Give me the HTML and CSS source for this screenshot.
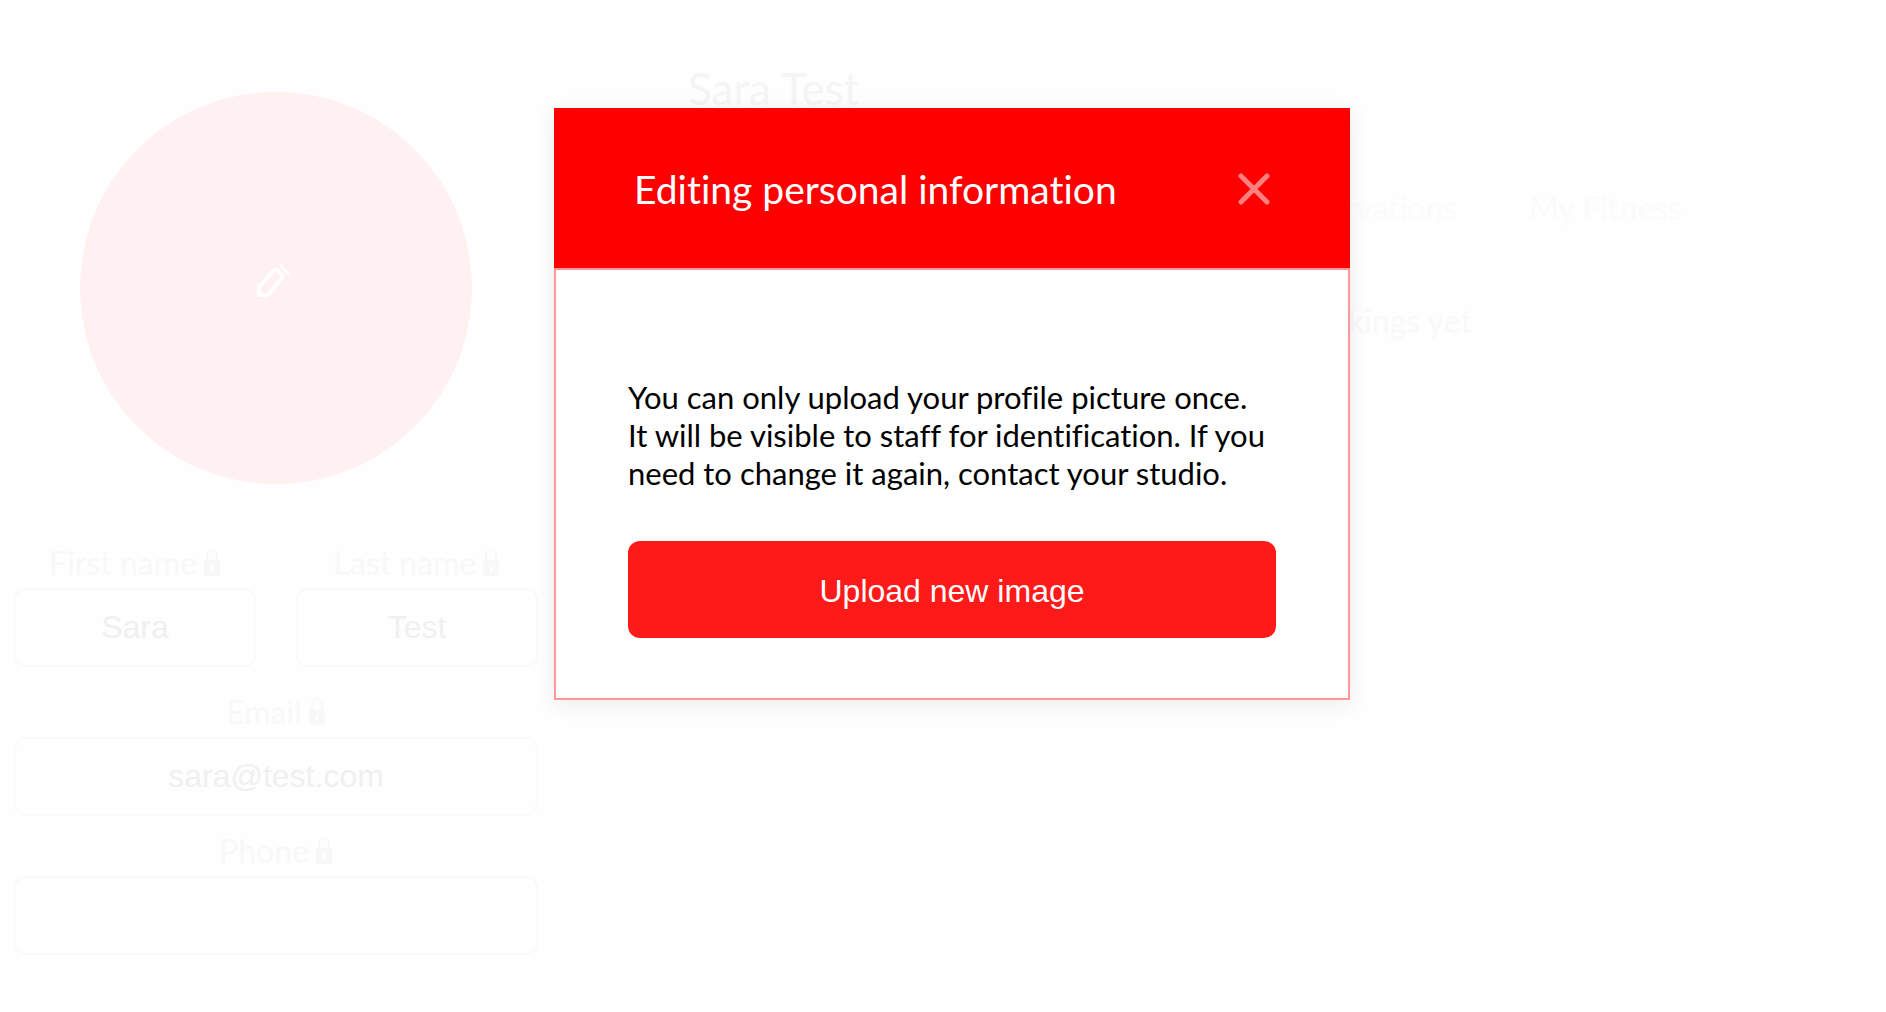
FILE: index.html
```html
<!DOCTYPE html>
<html lang="en">
<head>
  <meta charset="UTF-8">
  <title>Profile</title>
  <link rel="stylesheet" href="styles.css">
</head>
<body>

<svg class="sprite">
  <symbol id="lock" viewBox="0 0 18 28">
    <path d="M4 13V7a5 5 0 0 1 10 0v6" fill="none" stroke="currentColor" stroke-width="2"/>
    <path d="M1 12h16v14a2 2 0 0 1-2 2H3a2 2 0 0 1-2-2z" fill="currentColor"/>
    <path d="M9 18v5" stroke="#fff" stroke-width="2"/>
  </symbol>
</svg>

<div class="page">
  <aside class="sidebar">
    <button class="avatar" aria-label="Edit picture">
      <svg class="avatar-icon" viewBox="0 0 34 34">
        <path d="M3 31v-8L18 6q2-1 4 1l4 4q1 2 0 3L12 31z" fill="none" stroke="currentColor" stroke-width="4" stroke-linejoin="round"/>
        <path d="M24 1l9 10" stroke="currentColor" stroke-width="3"/>
      </svg>
    </button>

    <form class="details">
      <div class="name-row">
        <div class="field">
          <label for="firstName">First name <svg class="lock"><use href="#lock"/></svg></label>
          <input type="text" id="firstName" value="Sara" readonly>
        </div>
        <div class="field">
          <label for="lastName">Last name <svg class="lock"><use href="#lock"/></svg></label>
          <input type="text" id="lastName" value="Test" readonly>
        </div>
      </div>
      <div class="field">
        <label for="email">Email <svg class="lock"><use href="#lock"/></svg></label>
        <input type="email" id="email" value="sara@test.com" readonly>
      </div>
      <div class="field">
        <label for="phone">Phone <svg class="lock"><use href="#lock"/></svg></label>
        <input type="tel" id="phone" readonly>
      </div>
    </form>
  </aside>

  <main class="content">
    <h1>Sara Test</h1>
    <nav class="tabs">
      <a href="#">Reservations</a>
      <a href="#">My Fitness</a>
    </nav>
    <p class="empty">There are no bookings yet</p>
  </main>
</div>

<div class="overlay">
  <div class="modal" role="dialog" aria-labelledby="modalTitle">
    <div class="modal-header">
      <h2 id="modalTitle">Editing personal information</h2>
      <button class="close" aria-label="Close">
        <svg viewBox="0 0 32 32"><path d="M3 3l26 26M29 3L3 29" stroke="currentColor" stroke-width="5" stroke-linecap="round"/></svg>
      </button>
    </div>
    <div class="modal-body">
      <p>You can only upload your profile picture once.<br>
        It will be visible to staff for identification. If you need to change it again, contact your studio.</p>
      <button class="upload">Upload new image</button>
    </div>
  </div>
</div>

</body>
</html>
```
FILE: styles.css
```css
* {
  box-sizing: border-box;
}

body {
  margin: 0;
  background-color: #fefefe;
  color: #f8f8f8;
  font-family: Lato, sans-serif;
  font-variant-ligatures: none;
}

h1, h2, p {
  margin: 0;
  font-weight: 400;
}

button {
  border: none;
  padding: 0;
  cursor: pointer;
}

.sprite {
  display: none;
}

.page {
  display: flex;
  padding: 0 14px;
}

/* Sidebar */
.sidebar {
  flex: 0 0 524px;
  padding-top: 92px;
}

.avatar {
  display: flex;
  align-items: center;
  justify-content: center;
  width: 392px;
  height: 392px;
  margin: 0 auto 54px;
  padding: 0 6px 14px 0;
  border-radius: 50%;
  background-color: #fff1f1;
  color: #fff;
}

.avatar-icon {
  width: 34px;
  height: 34px;
}

.details {
  display: flex;
  flex-direction: column;
  gap: 10px;
}

.name-row {
  display: flex;
  gap: 40px;
  margin-bottom: 10px;
}

.field {
  flex: 1;
  min-width: 0;
  text-align: center;
}

.field label {
  display: flex;
  align-items: center;
  justify-content: center;
  gap: 6px;
  height: 50px;
  padding-bottom: 2px;
  font-size: 32px;
}

.lock {
  width: 18px;
  height: 28px;
}

.field input {
  display: block;
  width: 100%;
  height: 79px;
  border: 2px solid #fafafa;
  border-radius: 12px;
  background: none;
  color: #f0f0f0;
  font-family: "Liberation Sans", sans-serif;
  font-size: 32px;
  text-align: center;
}

/* Content */
.content {
  flex: 1;
  padding: 62px 0 0 150px;
}

.content h1 {
  color: #f5f5f5;
  font-size: 44px;
  line-height: 52px;
}

.tabs {
  display: flex;
  justify-content: flex-end;
  gap: 72px;
  margin-top: 75px;
  padding-right: 190px;
}

.tabs a {
  color: #fbfbfb;
  font-size: 32px;
  line-height: 38px;
  text-decoration: none;
}

.empty {
  margin-top: 75px;
  padding-left: 20px;
  color: #f9f9f9;
  font-size: 32px;
  line-height: 38px;
  text-align: center;
}

/* Modal */
.overlay {
  position: absolute;
  inset: 0;
  display: flex;
  justify-content: center;
  align-items: flex-start;
  padding: 108px 0 0 18px;
}

.modal {
  width: 100%;
  max-width: 796px;
  box-shadow: 0 4px 20px rgba(0, 0, 0, 0.08);
}

.modal-header {
  display: flex;
  align-items: center;
  justify-content: space-between;
  padding: 57px 80px 55px;
  background-color: #f00;
  color: #fff;
}

.modal-header h2 {
  font-size: 39px;
  line-height: 48px;
}

.close {
  background: none;
  color: #ff8080;
}

.close svg {
  display: block;
  width: 32px;
  height: 32px;
}

.modal-body {
  padding: 108px 72px 60px;
  border: 2px solid #f99;
  background-color: #fff;
  color: #000;
}

.modal-body p {
  font-size: 31px;
  line-height: 38px;
}

.upload {
  width: 100%;
  height: 97px;
  margin-top: 49px;
  padding-top: 4px;
  border-radius: 12px;
  background-color: #ff1a1a;
  color: #fff;
  font-family: "Liberation Sans", sans-serif;
  font-size: 32px;
}
```
